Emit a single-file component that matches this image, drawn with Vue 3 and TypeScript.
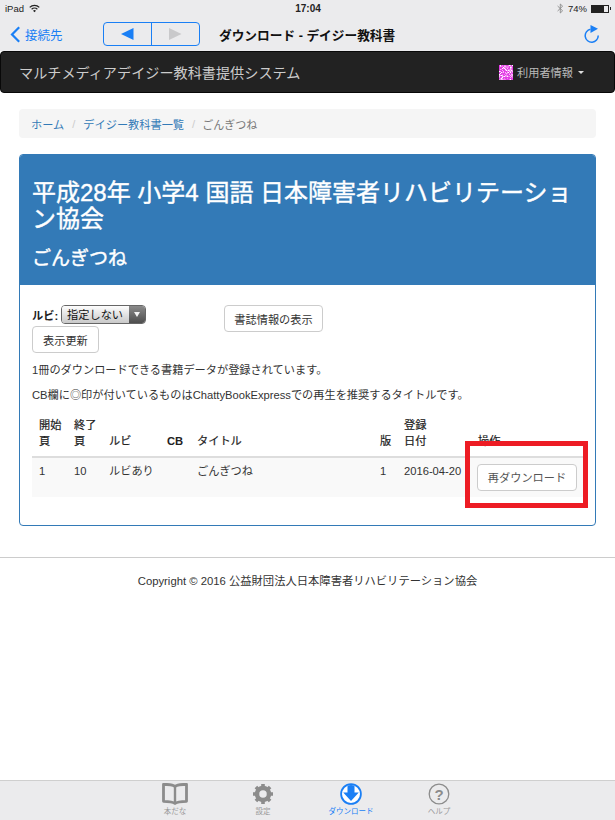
<script setup lang="ts">
interface Tab { label: string; active?: boolean }
const tabs: Tab[] = [{ label: '本だな' }, { label: '設定' }, { label: 'ダウンロード', active: true }, { label: 'ヘルプ' }]

const speckle = Array.from({ length: 14 * 15 }, (_, i) => {
  const x = i % 14
  const y = Math.floor(i / 14)
  const v = Math.sin(x * 12.9898 + y * 78.233) * 43758.5453
  const r = v - Math.floor(v)
  const fill = r < 0.42 ? '#e23fe4' : r < 0.72 ? '#f07cf0' : r < 0.9 ? '#f9b8f8' : '#ffffff'
  return { x, y, fill }
})
</script>

<template>
  <div class="page">
    <header class="chrome">
      <div class="status">
        <div class="st-left">
          <span>iPad</span>
          <svg width="11" height="9" viewBox="0 0 12 9"><path d="M6 8.600 4.400 6.900a2.300 2.300 0 0 1 3.200 0zM3.300 5.800 2.400 4.900a5.100 5.100 0 0 1 7.200 0l-.9.9a3.800 3.800 0 0 0-5.400 0zM1.300 3.800.3 2.800a8 8 0 0 1 11.400 0l-1 1a6.600 6.600 0 0 0-9.400 0z" fill="#222"/></svg>
        </div>
        <span class="st-time">17:04</span>
        <div class="st-right">
          <svg width="7" height="11" viewBox="0 0 7 11"><path d="M.6 3 5.600 7.800 3.300 10V1L5.600 3.200.6 8" fill="none" stroke="#8a8a8a" stroke-width=".9"/></svg>
          <span>74%</span>
          <span class="battery"><i></i></span>
        </div>
      </div>
      <div class="nav">
        <div class="back">
          <svg width="11" height="17" viewBox="0 0 11 17"><path d="M9.200 1.200 2 8.500l7.200 7.300" fill="none" stroke="#1a7ff5" stroke-width="2.200"/></svg>
          <span>接続先</span>
        </div>
        <div class="seg">
          <span class="seg-btn"><svg width="13" height="12" viewBox="0 0 13 12"><path d="M0 6 12.500 0v12z" fill="#1a7ff5"/></svg></span>
          <span class="seg-btn"><svg width="13" height="12" viewBox="0 0 13 12"><path d="M12.500 6 0 0v12z" fill="#c9c9cb"/></svg></span>
        </div>
        <div class="title">ダウンロード - デイジー教科書</div>
        <svg class="reload" width="16" height="19" viewBox="0 0 16 19"><path d="M6.500 5.300A6.500 6.500 0 1 0 14.200 11.500" fill="none" stroke="#1a7ff5" stroke-width="1.500"/><path d="M6.500 1 14 4.800 6.500 9z" fill="#1a7ff5"/></svg>
      </div>
    </header>

    <nav class="navbar">
      <span class="brand">マルチメディアデイジー教科書提供システム</span>
      <span class="user">
        <svg class="avatar" width="14" height="15" viewBox="0 0 14 15" shape-rendering="crispEdges">
          <rect v-for="(c, i) in speckle" :key="i" :x="c.x" :y="c.y" width="1" height="1" :fill="c.fill" />
        </svg>
        利用者情報
        <i class="caret"></i>
      </span>
    </nav>

    <main class="container">
      <ol class="breadcrumb">
        <li><a>ホーム</a></li>
        <li class="sep">/</li>
        <li><a>デイジー教科書一覧</a></li>
        <li class="sep">/</li>
        <li class="current">ごんぎつね</li>
      </ol>

      <section class="panel">
        <div class="panel-head">
          <h1>平成28年 小学4 国語 日本障害者リハビリテーション協会</h1>
          <h2>ごんぎつね</h2>
        </div>
        <div class="panel-body">
          <div class="controls">
            <div class="form-left">
              <div class="ruby-line">
                <label>ルビ:</label>
                <span class="select">
                  <span class="select-text">指定しない</span>
                  <span class="select-arrow"><i></i></span>
                </span>
              </div>
              <button class="btn">表示更新</button>
            </div>
            <button class="btn info">書誌情報の表示</button>
          </div>
          <p class="p1">1冊のダウンロードできる書籍データが登録されています。</p>
          <p class="p2">CB欄に◎印が付いているものはChattyBookExpressでの再生を推奨するタイトルです。</p>
          <table class="tbl">
            <thead>
              <tr>
                <th class="c1">開始<br />頁</th>
                <th class="c2">終了<br />頁</th>
                <th class="c3">ルビ</th>
                <th class="c4">CB</th>
                <th class="c5">タイトル</th>
                <th class="c6">版</th>
                <th class="c7">登録<br />日付</th>
                <th class="c8">操作</th>
              </tr>
            </thead>
            <tbody>
              <tr>
                <td>1</td>
                <td>10</td>
                <td>ルビあり</td>
                <td></td>
                <td>ごんぎつね</td>
                <td>1</td>
                <td>2016-04-20</td>
                <td class="action"><button class="btn">再ダウンロード</button></td>
              </tr>
            </tbody>
          </table>
        </div>
      </section>
    </main>

    <footer class="foot">Copyright © 2016 公益財団法人日本障害者リハビリテーション協会</footer>

    <div class="tabbar">
      <div v-for="(t, i) in tabs" :key="t.label" class="tab" :class="{ active: t.active }">
        <svg v-if="i === 0" width="26" height="22" viewBox="0 0 26 22"><path d="M13 3.500C11 1.800 8 1.300 1.500 1.300v17c6 0 9.500.5 11.500 2.200 2-1.700 5.500-2.200 11.500-2.200v-17C18 1.300 15 1.800 13 3.500z" fill="none" stroke="#8c8c8c" stroke-width="2.800" stroke-linejoin="round"/><path d="M13 3.500V20" stroke="#8c8c8c" stroke-width="2.400"/></svg>
        <svg v-else-if="i === 1" width="22" height="22" viewBox="0 0 22 22"><circle cx="11" cy="11" r="6" fill="none" stroke="#8c8c8c" stroke-width="4.500"/><g stroke="#8c8c8c" stroke-width="3.600"><path d="M11 1v3.500M11 17.500V21M1 11h3.500M17.500 11H21M3.900 3.900l2.500 2.500M15.600 15.600l2.500 2.500M18.100 3.900l-2.500 2.500M6.400 15.600l-2.500 2.500"/></g></svg>
        <svg v-else-if="i === 2" width="22" height="22" viewBox="0 0 22 22"><circle cx="11" cy="11" r="9.900" fill="#fff" stroke="#1a7ff5" stroke-width="1.800"/><path d="M7.500 2.700A8.500 8.500 0 0 1 14.500 2.700V9.500H18.800L11 18 3.200 9.500H7.500z" fill="#1a7ff5"/></svg>
        <svg v-else width="22" height="22" viewBox="0 0 22 22"><circle cx="11" cy="11" r="9.800" fill="none" stroke="#8c8c8c" stroke-width="1.300"/><text x="11" y="16.500" text-anchor="middle" class="q">?</text></svg>
        <span>{{ t.label }}</span>
      </div>
    </div>

    <div class="highlight"></div>
  </div>
</template>

<style>
html, body { margin: 0; background: #fff; }
</style>

<style scoped>
.page {
  position: relative;
  width: 615px;
  height: 820px;
  overflow: hidden;
  display: flex;
  flex-direction: column;
  background: #fff;
  font-family: "Liberation Sans", "Noto Sans CJK JP", sans-serif;
  font-size: 11.2px;
  color: #333;
}
.chrome { height: 51px; background: #ebebed; flex: none; }
.status { height: 17px; padding: 0 5px; display: flex; align-items: center; justify-content: space-between; font-size: 9.500px; color: #222; position: relative; }
.st-left { display: flex; align-items: center; gap: 5px; }
.st-time { position: absolute; left: 1px; right: 0; text-align: center; font-weight: 700; font-size: 10px; }
.st-right { display: flex; align-items: center; gap: 4px; padding-right: 1px; }
.battery { display: block; width: 18px; height: 8px; border: 1px solid #222; box-sizing: border-box; position: relative; }
.battery i { display: block; width: 12px; height: 6px; background: #222; }
.battery::after { content: ""; position: absolute; right: -3px; top: 1.500px; width: 1.500px; height: 3px; background: #222; }
.nav { height: 34px; display: flex; align-items: center; position: relative; }
.back { display: flex; align-items: center; gap: 4px; margin-left: 10px; color: #1a7ff5; font-size: 12.500px; width: 93px; flex: none; }
.seg { display: flex; width: 97px; height: 24px; box-sizing: border-box; border: 1px solid #1a7ff5; border-radius: 4px; flex: none; }
.seg-btn { flex: 1; display: flex; align-items: center; justify-content: center; }
.seg-btn + .seg-btn { border-left: 1px solid #1a7ff5; }
.title { margin-left: 19px; font-size: 12.700px; font-weight: 700; color: #111; white-space: nowrap; }
.reload { position: absolute; right: 15px; top: 7px; }

.navbar {
  height: 42px;
  flex: none;
  box-sizing: border-box;
  background: #222;
  border: 1px solid #080808;
  border-radius: 4px;
  display: flex;
  align-items: center;
  justify-content: space-between;
  padding: 0 30px 0 18px;
  color: #ddd;
}
.brand { font-size: 14.150px; color: #ccc; }
.user { display: flex; align-items: center; gap: 4px; font-size: 11.200px; color: #bbb; }
.avatar { display: block; }
.caret { display: block; width: 0; height: 0; margin-left: 1px; border-left: 3.500px solid transparent; border-right: 3.500px solid transparent; border-top: 3.500px solid #ddd; }

.container { padding: 16px 19px 0; flex: none; }
.breadcrumb { display: flex; align-items: center; gap: 8px; list-style: none; margin: 0 0 16px; padding: 0 12px; height: 29px; box-sizing: border-box; background: #f5f5f5; border-radius: 4px; font-size: 11.200px; }
.breadcrumb a { color: #337ab7; }
.sep { color: #ccc; }
.current { color: #777; font-size: 11px; margin-left: -1px; }

.panel { height: 372px; box-sizing: border-box; border: 1px solid #337ab7; border-radius: 4px; overflow: hidden; }
.panel-head { height: 130px; box-sizing: border-box; background: #337ab7; color: #fff; padding: 25px 12px 0; border-bottom: 1px solid #337ab7; }
.panel-head h1 { margin: 0; font-size: 24px; line-height: 26px; font-weight: 400; -webkit-text-stroke: .4px #fff; }
.panel-head h2 { margin: 16px 0 0; font-size: 19px; line-height: 22px; font-weight: 400; -webkit-text-stroke: .4px #fff; }
.panel-body { padding: 20px 12px 0; }
.controls { display: flex; align-items: flex-start; height: 50px; }
.form-left { width: 192px; flex: none; }
.ruby-line { display: flex; align-items: center; gap: 3px; height: 19px; margin-bottom: 2px; }
.ruby-line label { font-weight: 700; color: #222; font-size: 11.200px; }
.select { display: flex; width: 85px; height: 19px; box-sizing: border-box; border: 1px solid #666; border-radius: 4px; overflow: hidden; }
.select-text { flex: 1; padding-left: 5px; line-height: 18px; font-size: 11.200px; color: #111; background: linear-gradient(#fdfdfd, #c9c9c9); }
.select-arrow { width: 16px; background: linear-gradient(#8a8a8a, #4e4e4e); display: flex; align-items: center; justify-content: center; }
.select-arrow i { width: 0; height: 0; border-left: 3px solid transparent; border-right: 3px solid transparent; border-top: 5px solid #f4f4f4; }
.btn { font: inherit; font-size: 11.200px; color: #333; background: #fff; border: 1px solid #ccc; border-radius: 4px; height: 27px; padding: 0 10px; box-sizing: border-box; white-space: nowrap; }
.info { width: 99px; padding: 0; }
.p1 { margin: 7px 0 0; line-height: 16px; font-size: 11.200px; color: #333; }
.p2 { margin: 9px 0 0; line-height: 16px; font-size: 11.200px; color: #333; white-space: nowrap; }

.tbl { width: 551px; margin-top: 14px; border-collapse: collapse; table-layout: fixed; font-size: 11.200px; }
.tbl th { text-align: left; vertical-align: bottom; font-weight: 400; padding: 0 7px 7px; line-height: 16px; border-bottom: 2px solid #ddd; color: #222; white-space: nowrap; -webkit-text-stroke: .2px #222; }
.tbl th.c4 { font-weight: 700; -webkit-text-stroke: 0; }
.tbl td { vertical-align: top; padding: 5px 7px 0; height: 40px; box-sizing: border-box; background: #f9f9f9; line-height: 16px; white-space: nowrap; }
.tbl td.action { padding: 6px 0 0 6px; }
.c1 { width: 21px; }
.c2 { width: 21px; }
.c3 { width: 44px; }
.c4 { width: 16px; }
.c5 { width: 169px; }
.c6 { width: 10px; }
.c7 { width: 60px; }
.c8 { width: auto; }
.action .btn { width: 100px; padding: 0; color: #555; }

.foot { margin-top: 31px; border-top: 1px solid #ccc; padding-top: 15px; text-align: center; font-size: 11.300px; line-height: 16px; color: #333; flex: none; }

.tabbar { position: absolute; left: 0; right: 0; bottom: 0; height: 40px; box-sizing: border-box; background: #ebebed; border-top: 1px solid #cfcfcf; display: flex; padding-left: 131px; padding-top: 2px; }
.tab { width: 88px; display: flex; flex-direction: column; align-items: center; font-size: 7.500px; line-height: 11px; color: #9a9a9a; gap: 1px; }
.tab.active { color: #1a7ff5; }
.q { font-size: 15px; font-weight: 700; fill: #8c8c8c; font-family: "Liberation Sans", sans-serif; }

.highlight { position: absolute; left: 465px; top: 441px; width: 123px; height: 67px; box-sizing: border-box; border: 5.500px solid #ed1c24; }
</style>
